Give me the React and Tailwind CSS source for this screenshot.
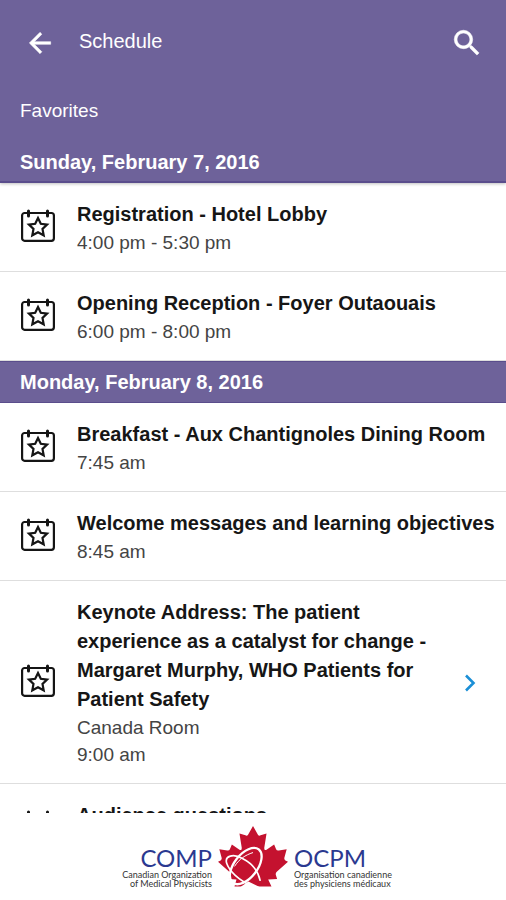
const days = [
  {
    date: "Sunday, February 7, 2016",
    edge: "border-b-2 pt-0.5 shadow-[0_1px_3px_rgba(0,0,0,0.25)]",
    events: [
      { title: "Registration - Hotel Lobby", details: ["4:00 pm - 5:30 pm"] },
      { title: "Opening Reception - Foyer Outaouais", details: ["6:00 pm - 8:00 pm"] },
    ],
  },
  {
    date: "Monday, February 8, 2016",
    edge: "border-y",
    events: [
      { title: "Breakfast - Aux Chantignoles Dining Room", details: ["7:45 am"] },
      { title: "Welcome messages and learning objectives", details: ["8:45 am"] },
      {
        title:
          "Keynote Address: The patient experience as a catalyst for change - Margaret Murphy, WHO Patients for Patient Safety",
        details: ["Canada Room", "9:00 am"],
        link: true,
      },
      { title: "Audience questions", details: [] },
    ],
  },
];

function CalendarStar() {
  return (
    <svg viewBox="0 0 34 33" className="mb-1.5 h-[33px] w-[34px] shrink-0" fill="none" stroke="#151515" strokeWidth="2.2" aria-hidden="true">
      <rect x="1.1" y="4" width="31.8" height="27.8" rx="2.5" />
      <path d="M7.5 2v5M26.5 2v5" strokeWidth="3" strokeLinecap="round" />
      <path d="M17 9l2.8 5.8 6.3.8-4.6 4.4 1.2 6.3-5.7-3.1-5.7 3.1 1.2-6.3-4.6-4.4 6.3-.8z" />
    </svg>
  );
}

function DayHeading({ edge, children }) {
  return (
    <h2 className={`relative flex h-[42px] items-center border-[#5a4d8c] bg-[#6e629a] px-5 text-[20px] font-bold text-white ${edge}`}>
      {children}
    </h2>
  );
}

function EventRow({ event }) {
  const body = (
    <>
      <CalendarStar />
      <div className="min-h-14 min-w-0 flex-1">
        <h3 className="text-[20px] leading-[29px] font-bold text-[#161616]">{event.title}</h3>
        {event.details.map((line) => (
          <p key={line} className="text-[19px] leading-[27px] text-[#444]">{line}</p>
        ))}
      </div>
      {event.link && (
        <svg viewBox="0 0 12 18" className="mr-[22px] h-[18px] w-3 shrink-0" fill="none" stroke="#1b8fd6" strokeWidth="2.6" aria-hidden="true">
          <path d="M2 1.5L9.5 9l-7.5 7.5" />
        </svg>
      )}
    </>
  );
  const row = "flex items-center gap-[22px] pt-[17px] pr-2 pb-[15px] pl-[21px]";
  return (
    <li className="border-b border-[#dedede]">
      {event.link ? <a href="#keynote" className={row}>{body}</a> : <div className={row}>{body}</div>}
    </li>
  );
}

function Leaf() {
  return (
    <svg viewBox="0 0 212 184" className="h-[61px] w-[70px] shrink-0" aria-hidden="true">
      <path
        fill="#c4122f"
        d="M106 0L121 26Q124 31 129 28L147 22L140 66Q140 76 148 71L170 56L176 70Q178 75 184 74L208 70L201 96Q200 101 204 104L212 108L178 138Q174 142 175 147L179 160L152 162L162 183L50 183L56 162L33 160L37 147Q38 142 34 138L0 108L8 104Q12 101 11 96L4 70L28 74Q34 75 36 70L42 56L64 71Q72 76 72 66L65 22L83 28Q88 31 91 26Z"
      />
      <path fill="#fff" d="M68 184l24-16 34 16z" />
      <g fill="none" stroke="#fff">
        <ellipse cx="84" cy="121" rx="64" ry="35" transform="rotate(-52 84 121)" strokeWidth="7" />
        <path d="M104 182C62 164 34 136 26 112C20 90 46 82 74 98C102 112 122 136 128 166" strokeWidth="5" />
        <path d="M50 122C64 100 82 88 106 80" strokeWidth="3" />
      </g>
    </svg>
  );
}

export default function App() {
  return (
    <div className="flex h-screen flex-col bg-white font-['Liberation_Sans',Arial,sans-serif]">
      <header className="shrink-0 bg-[#6e629a] text-white">
        <div className="flex h-[81px] items-center pr-[22px] pl-6">
          <button type="button" aria-label="Back" className="mt-1 shrink-0">
            <svg viewBox="0 0 24 24" className="size-8" fill="currentColor" stroke="currentColor" strokeWidth="0.4">
              <path d="M20 11H7.83l5.59-5.59L12 4l-8 8 8 8 1.41-1.41L7.83 13H20v-2z" />
            </svg>
          </button>
          <h1 className="ml-[23px] flex-1 text-[20px]">Schedule</h1>
          <button type="button" aria-label="Search" className="mt-1 shrink-0">
            <svg viewBox="0 0 24 24" className="size-[34px]" fill="currentColor" stroke="currentColor" strokeWidth="0.4">
              <path d="M15.5 14h-.79l-.28-.27A6.471 6.471 0 0 0 16 9.5 6.5 6.5 0 1 0 9.5 16c1.61 0 3.09-.59 4.23-1.57l.27.28v.79l5 4.99L20.49 19l-4.99-5zm-6 0C7.01 14 5 11.99 5 9.5S7.01 5 9.5 5 14 7.01 14 9.5 11.99 14 9.5 14z" />
            </svg>
          </button>
        </div>
        <p className="flex h-[60px] items-center px-5 text-[19px]">Favorites</p>
      </header>

      <main className="min-h-0 flex-1 overflow-hidden">
        {days.map((day) => (
          <section key={day.date}>
            <DayHeading edge={day.edge}>{day.date}</DayHeading>
            <ul>
              {day.events.map((event) => (
                <EventRow key={event.title} event={event} />
              ))}
            </ul>
          </section>
        ))}
      </main>

      <footer className="flex h-[87px] shrink-0 items-center justify-center gap-[6px] bg-white font-[Lato,sans-serif]">
        <div className="flex w-[102px] flex-col items-end pt-5">
          <span className="text-[24px] leading-[24px] text-[#2b3990]">COMP</span>
          <span className="text-right text-[9px] leading-[9px] whitespace-nowrap text-[#333]">
            Canadian Organization
            <br />
            of Medical Physicists
          </span>
        </div>
        <Leaf />
        <div className="flex w-[102px] flex-col items-start pt-5">
          <span className="text-[24px] leading-[24px] text-[#2b3990]">OCPM</span>
          <span className="text-[9px] leading-[9px] whitespace-nowrap text-[#333]">
            Organisation canadienne
            <br />
            des physiciens médicaux
          </span>
        </div>
      </footer>
    </div>
  );
}
